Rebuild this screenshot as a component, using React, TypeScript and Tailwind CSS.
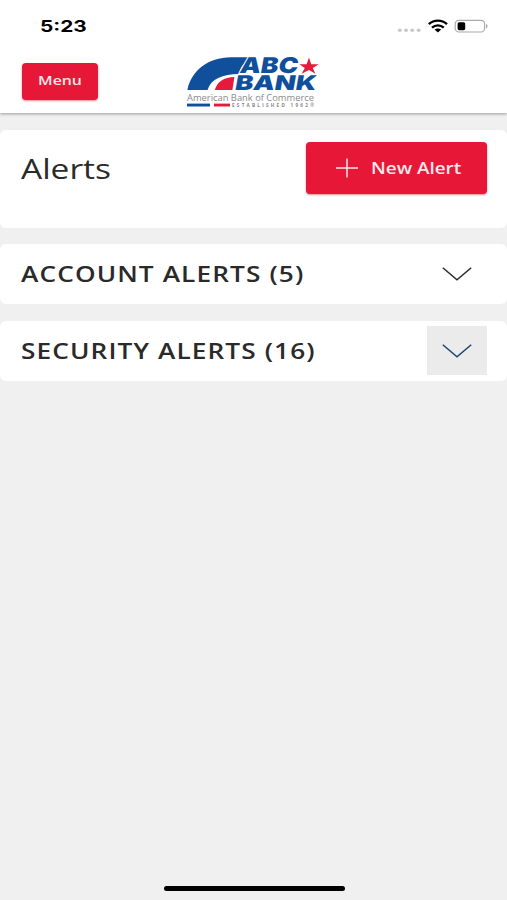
import React, { useState } from "react";

interface AlertSection {
  id: string;
  label: string;
  count: number;
}

const ALERT_SECTIONS: AlertSection[] = [
  { id: "account", label: "Account Alerts", count: 5 },
  { id: "security", label: "Security Alerts", count: 16 },
];

function StatusBar() {
  return (
    <div className="flex h-[52px] items-center justify-between pl-10 pr-[19px]">
      <span className="origin-left scale-x-[1.3] font-['Inter'] text-[16px] font-bold leading-none text-black">
        5:23
      </span>
      <svg width="91" height="16" viewBox="397 18 91 16" aria-hidden="true">
        <g fill="#c9c9c9">
          <ellipse cx="399.8" cy="30.3" rx="2" ry="1.7" />
          <ellipse cx="406" cy="30.3" rx="2" ry="1.7" />
          <ellipse cx="412.2" cy="30.3" rx="2" ry="1.7" />
          <ellipse cx="418.6" cy="30.3" rx="2" ry="1.7" />
        </g>
        <g fill="none" stroke="#000" strokeWidth="2.4">
          <path d="M428.8 24.2C434 19.4 441.8 19.4 447 24.2" />
          <path d="M432 27.6C435.4 24.6 440.4 24.6 443.8 27.6" />
        </g>
        <path d="M434.6 29.6C436.5 28 439.3 28 441.2 29.6L437.9 32.4Z" fill="#000" />
        <rect x="455.2" y="20.4" width="29.4" height="11.6" rx="3.6" fill="#fff" stroke="#aaa" strokeWidth="1.2" />
        <rect x="457.6" y="22.2" width="7.6" height="8" rx="1.6" fill="#000" />
        <path d="M486 24C488 24.6 488 27.8 486 28.4Z" fill="#aaa" />
      </svg>
    </div>
  );
}

function BankLogo() {
  return (
    <svg className="overflow-visible" width="134" height="54" viewBox="186 55 134 54" role="img" aria-label="ABC Bank">
      <path
        d="M187.4 90C191 71 208 57.2 231 57.2H252L246 62C242 65 240 69 238.6 74C223 74 210.6 79 207.6 90Z"
        fill="#0f4f9c"
      />
      <path d="M214.8 90C217 82 224 77 234.4 77L232.4 90Z" fill="#e51b3c" />
      <g
        fill="#0f4f9c"
        stroke="#fff"
        strokeWidth="1.8"
        paintOrder="stroke"
        fontFamily="Inter, sans-serif"
        fontWeight="900"
      >
        <text
          x="0"
          y="0"
          transform="translate(239 73.2) skewX(-10)"
          fontSize="21.8"
          textLength="58"
          lengthAdjust="spacingAndGlyphs"
        >
          ABC
        </text>
        <text
          x="0"
          y="0"
          transform="translate(234.2 90.2) skewX(-10)"
          fontSize="20.4"
          textLength="81"
          lengthAdjust="spacingAndGlyphs"
        >
          BANK
        </text>
      </g>
      <path
        d="M309 57.4L311.2 64.2H318.8L312.8 67.9L315.4 73.8L309 69.9L301.6 73.8L304.8 67.9L299.4 64.2H306.6Z"
        fill="#e51b3c"
      />
      <text
        x="187"
        y="100.6"
        fontSize="8.6"
        fontFamily="'Open Sans', sans-serif"
        fill="#8b8b8b"
        textLength="127"
        lengthAdjust="spacingAndGlyphs"
      >
        American Bank of Commerce
      </text>
      <path d="M187 103.6H210V106.5H187Z" fill="#0f4f9c" />
      <path d="M214 103.6H230V106.5H214Z" fill="#e51b3c" />
      <text
        x="232"
        y="106.8"
        fontSize="4.6"
        fontWeight="700"
        fontFamily="'Open Sans', sans-serif"
        fill="#888"
        textLength="82"
      >
        ESTABLISHED 1962®
      </text>
    </svg>
  );
}

function Header() {
  return (
    <header className="relative h-[113px] bg-white shadow-[0_1px_3px_rgba(0,0,0,0.35)]">
      <StatusBar />
      <div className="flex items-start pl-[22px]">
        <button
          type="button"
          className="mt-[11px] flex h-[37px] w-[76px] items-center justify-center rounded-[4px] bg-[#e61737] pb-[2px] pr-px text-white/90 shadow-[0_1px_2px_rgba(200,20,50,0.5)]"
        >
          <span className="scale-x-[1.22] text-[13px] font-semibold leading-none">Menu</span>
        </button>
        <div className="ml-[88px] mt-[3px]">
          <BankLogo />
        </div>
      </div>
    </header>
  );
}

export default function App() {
  const [active, setActive] = useState("security");

  return (
    <div className="flex h-[900px] w-[507px] flex-col overflow-hidden bg-[#f0f0f0] font-['Open_Sans',sans-serif] text-[#2a2a2a]">
      <Header />

      <main className="flex flex-1 flex-col gap-4 pt-[17px]">
        <section className="flex h-[98px] items-start justify-between rounded-[6px] bg-white pl-[21px] pr-5 pt-3">
          <h1 className="mt-3 origin-left scale-x-[1.24] text-[27px] leading-[30px]">Alerts</h1>
          <button
            type="button"
            className="flex h-[52px] w-[181px] items-center rounded-[4px] bg-[#e61737] pl-[30px] text-white/90 shadow-[0_1px_2px_rgba(200,20,50,0.5)]"
          >
            <svg width="22" height="20" viewBox="0 0 22 20" className="mb-px" aria-hidden="true">
              <path d="M0 10H22M11 0.5V19.5" stroke="currentColor" strokeWidth="1.5" />
            </svg>
            <span className="ml-[13px] origin-left scale-x-[1.18] whitespace-nowrap text-[16px] font-semibold leading-none">
              New Alert
            </span>
          </button>
        </section>

        {ALERT_SECTIONS.map((section) => {
          const isActive = active === section.id;

          return (
            <section
              key={section.id}
              className="flex h-[60px] items-center justify-between rounded-[6px] bg-white pl-[21px] pr-5 last:mt-[0.5px]"
            >
              <h2 className="origin-left scale-x-[1.22] whitespace-nowrap text-[21.5px] font-semibold uppercase leading-none tracking-[0.9px]">
                {section.label} ({section.count})
              </h2>
              <button
                type="button"
                onClick={() => setActive(section.id)}
                aria-label={`Toggle ${section.label}`}
                className={`flex h-[49px] w-[60px] items-center justify-center ${isActive ? "bg-[#ebebeb] text-[#1d466f]" : "text-[#2a2a2a]"}`}
              >
                <svg width="30" height="14" viewBox="0 0 30 14" fill="none" aria-hidden="true">
                  <path d="M0.8 0.8L15 12.8L29.2 0.8" stroke="currentColor" strokeWidth="1.5" />
                </svg>
              </button>
            </section>
          );
        })}
      </main>

      {/* Home indicator */}
      <div className="mx-auto mb-[9px] h-[5.5px] w-[181px] translate-x-px rounded-full bg-black" />
    </div>
  );
}
